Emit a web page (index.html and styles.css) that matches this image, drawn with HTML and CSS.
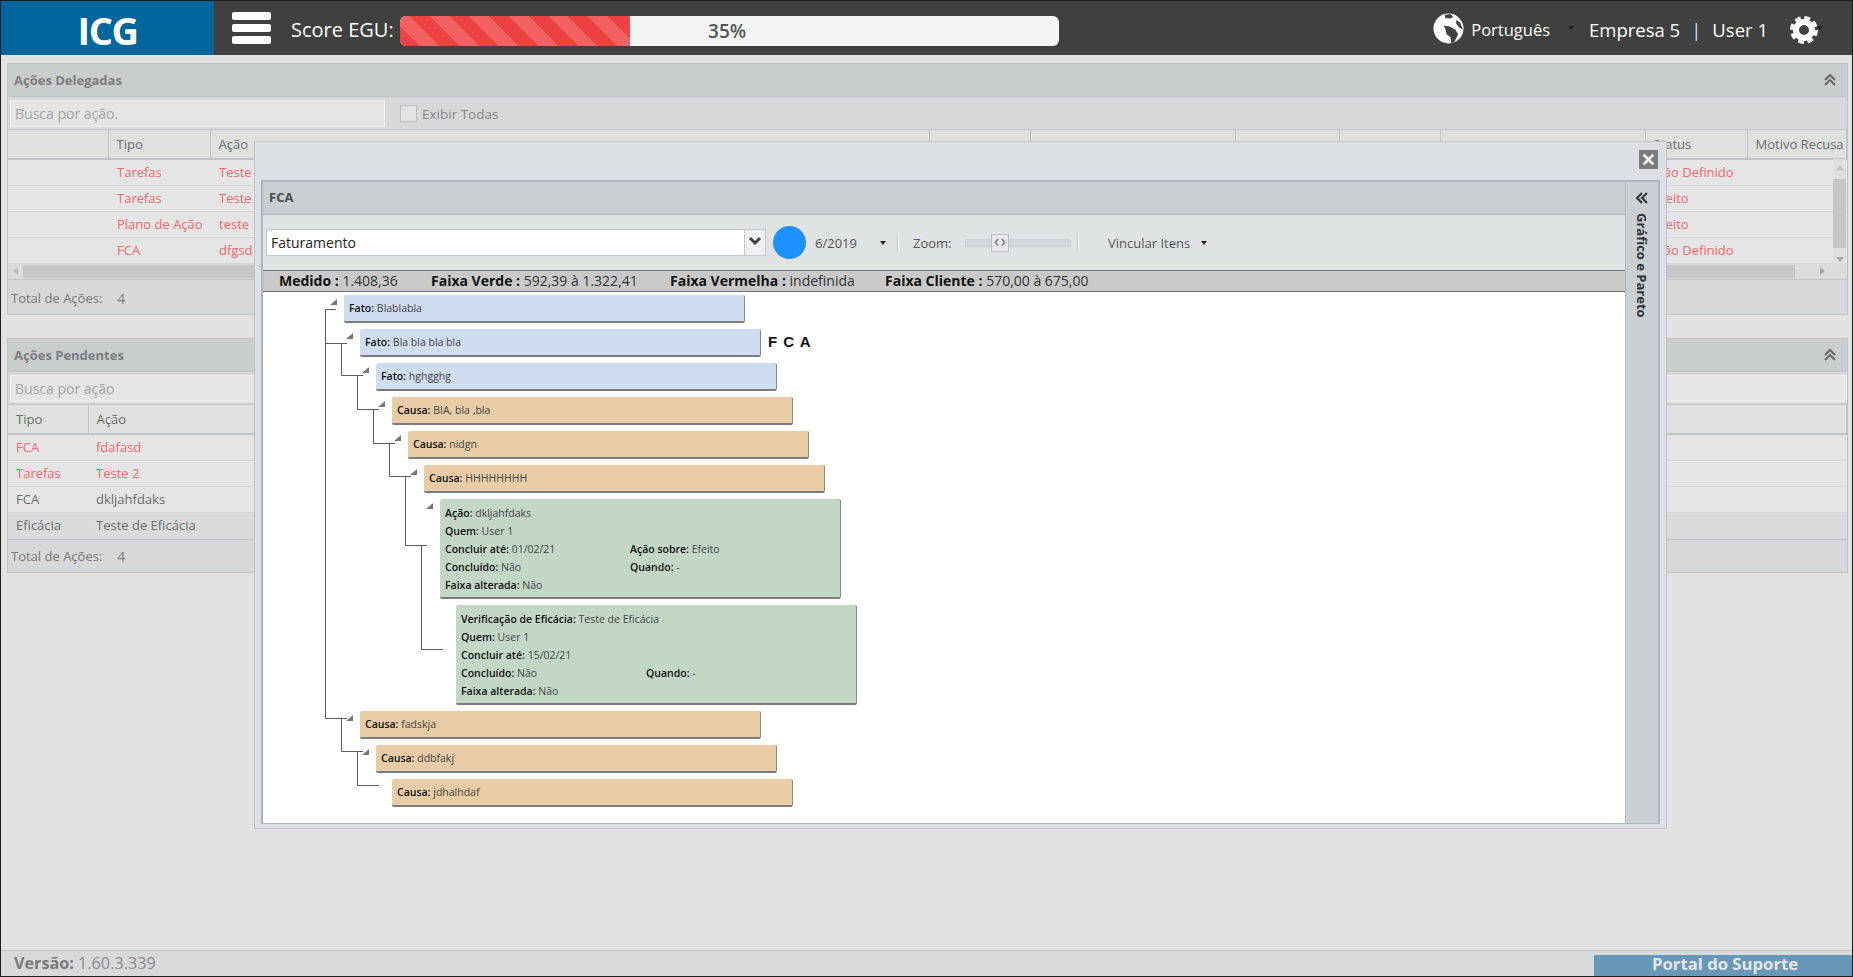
FILE: index.html
```html
<!DOCTYPE html>
<html lang="pt">
<head>
    <meta charset="UTF-8">
    <meta name="viewport" content="width=device-width, initial-scale=1.0">
    <title>ICG</title>
    <link rel="stylesheet" href="styles.css">
</head>
<body>
<div class="app">
    <header class="topbar">
        <div class="logo">ICG</div>
        <div class="burger"><span></span><span></span><span></span></div>
        <div class="score-label">Score EGU:</div>
        <div class="score-bar">
            <div class="score-fill"></div>
            <div class="score-text">35%</div>
        </div>
        <div class="user-area">
            <svg class="globe" viewBox="0 0 32 32">
                <circle cx="16" cy="16" r="15.5" fill="#fff"/>
                <path d="M12 2l6-1 3 3-4 2-2-1-2 1zM11 13l6 1 6 3 3 5-4 8-3 1-1-6-4-3-1-5zM24 7l4 3 3 7-4-2-3-4z" fill="#404040"/>
            </svg>
            <span class="lang">Português</span>
            <span class="caret caret-dark"></span>
            <span class="company">Empresa 5</span>
            <span class="pipe">|</span>
            <span class="user">User 1</span>
            <svg class="gear" viewBox="0 0 28 28">
                <circle cx="14" cy="14" r="11.5" fill="none" stroke="#fff" stroke-width="5" stroke-dasharray="5.5 3.53" />
                <circle cx="14" cy="14" r="8" fill="none" stroke="#fff" stroke-width="6"/>
            </svg>
            <span class="caret caret-dark caret-gear"></span>
        </div>
    </header>

    <main class="content">
        <section class="panel panel-top">
            <div class="panel-head">
                <span>Ações Delegadas</span>
                <svg class="dbl-up" viewBox="0 0 14 14"><path d="M2 7l5-5 5 5M2 12l5-5 5 5"/></svg>
            </div>
            <div class="panel-tools">
                <input class="search search-wide" placeholder="Busca por ação.">
                <span class="check"></span>
                <span class="check-label">Exibir Todas</span>
            </div>
            <div class="table-box">
                <table class="grid grid-top">
                    <colgroup>
                        <col class="w100"><col class="w102"><col class="w719"><col class="w101"><col class="w205"><col class="w104"><col class="w101"><col class="w205"><col class="w102"><col>
                    </colgroup>
                    <thead>
                        <tr><th></th><th>Tipo</th><th>Ação</th><th></th><th></th><th></th><th></th><th></th><th>Status</th><th>Motivo Recusa</th></tr>
                    </thead>
                    <tbody>
                        <tr class="late"><td></td><td>Tarefas</td><td>Teste</td><td></td><td></td><td></td><td></td><td></td><td>Não Definido</td><td></td></tr>
                        <tr class="late"><td></td><td>Tarefas</td><td>Teste</td><td></td><td></td><td></td><td></td><td></td><td>Efeito</td><td></td></tr>
                        <tr class="late"><td></td><td>Plano de Ação</td><td>teste</td><td></td><td></td><td></td><td></td><td></td><td>Efeito</td><td></td></tr>
                        <tr class="late"><td></td><td>FCA</td><td>dfgsd</td><td></td><td></td><td></td><td></td><td></td><td>Não Definido</td><td></td></tr>
                    </tbody>
                </table>
                <div class="vscroll">
                    <span class="tri tri-up"></span>
                    <span class="vthumb"></span>
                    <span class="tri tri-down"></span>
                </div>
                <div class="hscroll">
                    <span class="tri tri-left"></span>
                    <span class="hthumb"></span>
                    <span class="tri tri-right"></span>
                </div>
            </div>
            <div class="panel-foot">
                <span>Total de Ações:</span>
                <span class="total">4</span>
            </div>
        </section>

        <section class="panel panel-low">
            <div class="panel-head">
                <span>Ações Pendentes</span>
                <svg class="dbl-up" viewBox="0 0 14 14"><path d="M2 7l5-5 5 5M2 12l5-5 5 5"/></svg>
            </div>
            <div class="panel-tools">
                <input class="search search-full" placeholder="Busca por ação">
            </div>
            <table class="grid grid-low">
                <colgroup><col class="w80"><col></colgroup>
                <thead><tr><th>Tipo</th><th>Ação</th></tr></thead>
                <tbody>
                    <tr class="late"><td>FCA</td><td>fdafasd</td></tr>
                    <tr class="late"><td>Tarefas</td><td>Teste 2</td></tr>
                    <tr><td>FCA</td><td>dkljahfdaks</td></tr>
                    <tr class="shade"><td>Eficácia</td><td>Teste de Eficácia</td></tr>
                </tbody>
            </table>
            <div class="panel-foot">
                <span>Total de Ações:</span>
                <span class="total">4</span>
            </div>
        </section>
    </main>

    <footer class="footer">
        <div class="version"><b>Versão:</b> 1.60.3.339</div>
        <div class="support">Portal do Suporte</div>
    </footer>

    <div class="modal">
        <div class="modal-close">
            <svg viewBox="0 0 12 12"><path d="M1.5 1.5l9 9M10.5 1.5l-9 9"/></svg>
        </div>
        <div class="fca">
            <div class="fca-main">
                <div class="fca-title">FCA</div>
                <div class="fca-tools">
                    <div class="combo">
                        <span class="combo-text">Faturamento</span>
                        <span class="combo-btn">
                            <svg viewBox="0 0 14 10"><path d="M2 2l5 5 5-5"/></svg>
                        </span>
                    </div>
                    <span class="dot"></span>
                    <span class="period">6/2019</span>
                    <span class="caret caret-black"></span>
                    <span class="sep"></span>
                    <span class="zoom-label">Zoom:</span>
                    <div class="slider">
                        <span class="slider-thumb">
                            <svg viewBox="0 0 14 10"><path d="M5 1L1.5 5 5 9M9 1l3.500 4L9 9"/></svg>
                        </span>
                    </div>
                    <span class="sep sep-b"></span>
                    <span class="link-items">Vincular Itens</span>
                    <span class="caret caret-black"></span>
                </div>
                <div class="fca-status">
                    <span class="st st1"><b>Medido :</b> 1.408,36</span>
                    <span class="st st2"><b>Faixa Verde :</b> 592,39 à 1.322,41</span>
                    <span class="st st3"><b>Faixa Vermelha :</b> indefinida</span>
                    <span class="st"><b>Faixa Cliente :</b> 570,00 à 675,00</span>
                </div>
                <div class="tree">
                    <svg class="tree-lines" viewBox="263 291 1362 533">
                        <path d="M336 308.500H325.500V717.500H347M325.500 342.500H347M341.500 342.500V374.500H363M357.500 374.500V408.500H379M373.500 408.500V442.500H395M389.500 442.500V475.500H411M405.500 475.500V544.500H427M421.500 544.500V648.500H443M341.500 717.500V750.500H363M357.500 750.500V784.500H379"/>
                    </svg>
                    <div class="card fato tick"><b>Fato:</b> Blablabla</div>
                    <div class="kids">
                        <div class="row-fca">
                            <div class="card fato tick"><b>Fato:</b> Bla bla bla bla</div>
                            <span class="fca-mark">F C A</span>
                        </div>
                        <div class="kids">
                            <div class="card fato tick"><b>Fato:</b> hghgghg</div>
                            <div class="kids">
                                <div class="card causa tick"><b>Causa:</b> BIA, bla ,bla</div>
                                <div class="kids">
                                    <div class="card causa tick"><b>Causa:</b> nidgn</div>
                                    <div class="kids">
                                        <div class="card causa tick"><b>Causa:</b> HHHHHHHH</div>
                                        <div class="kids">
                                            <div class="card acao tick">
                                                <div class="wide"><b>Ação:</b> dkljahfdaks</div>
                                                <div class="wide"><b>Quem:</b> User 1</div>
                                                <div><b>Concluir até:</b> 01/02/21</div>
                                                <div><b>Ação sobre:</b> Efeito</div>
                                                <div><b>Concluído:</b> Não</div>
                                                <div><b>Quando:</b> -</div>
                                                <div class="wide"><b>Faixa alterada:</b> Não</div>
                                            </div>
                                            <div class="kids">
                                                <div class="card acao">
                                                    <div class="wide"><b>Verificação de Eficácia:</b> Teste de Eficácia</div>
                                                    <div class="wide"><b>Quem:</b> User 1</div>
                                                    <div class="wide"><b>Concluir até:</b> 15/02/21</div>
                                                    <div><b>Concluído:</b> Não</div>
                                                    <div><b>Quando:</b> -</div>
                                                    <div class="wide"><b>Faixa alterada:</b> Não</div>
                                                </div>
                                            </div>
                                        </div>
                                    </div>
                                </div>
                            </div>
                        </div>
                        <div class="card causa tick"><b>Causa:</b> fadskja</div>
                        <div class="kids">
                            <div class="card causa tick"><b>Causa:</b> ddbfakj</div>
                            <div class="kids">
                                <div class="card causa"><b>Causa:</b> jdhalhdaf</div>
                            </div>
                        </div>
                    </div>
                </div>
            </div>
            <aside class="fca-side">
                <svg class="dbl-left" viewBox="0 0 14 14"><path d="M7 2L2 7l5 5M12 2L7 7l5 5"/></svg>
                <span class="side-text">Gráfico e Pareto</span>
            </aside>
        </div>
    </div>
</div>
</body>
</html>
```
FILE: styles.css
```css
* {
    box-sizing: border-box;
}
html, body {
    margin: 0;
    height: 100%;
}
body {
    font-family: "Open Sans", "Noto Sans", sans-serif;
    font-size: 13px;
    color: #6b6b6b;
}
.app {
    position: relative;
    height: 100%;
    display: flex;
    flex-direction: column;
    background-color: #e2e2e2;
    border: 1px solid #1e1e1e;
    border-top-width: 1px;
}

/* barra superior */
.topbar {
    height: 54px;
    flex: none;
    display: flex;
    align-items: center;
    background-color: #404040;
    color: #fff;
}
.logo {
    width: 213px;
    height: 100%;
    padding-top: 2px;
    background-color: #00669c;
    text-align: center;
    font-size: 38px;
    font-weight: 700;
    line-height: 54px;
    letter-spacing: -1.5px;
}
.burger {
    width: 39px;
    margin-left: 18px;
    display: flex;
    flex-direction: column;
    gap: 4px;
}
.burger span {
    height: 8px;
    background-color: #fff;
    border-radius: 2px;
}
.score-label {
    margin: 2px 0 0 20px;
    font-size: 20px;
}
.score-bar {
    position: relative;
    width: 659px;
    height: 30px;
    margin: 5px 0 0 6px;
    background-color: #f4f4f4;
    border-radius: 6px;
    overflow: hidden;
}
.score-fill {
    width: 35%;
    height: 100%;
    background: repeating-linear-gradient(45deg, #ee4242 0, #ee4242 14px, #f26262 14px, #f26262 28px);
}
.score-text {
    position: absolute;
    top: 0;
    left: -2px;
    width: 100%;
    color: #555;
    font-size: 19px;
    font-weight: 600;
    line-height: 30px;
    text-align: center;
}
.user-area {
    margin-left: auto;
    display: flex;
    align-items: center;
    font-size: 18.500px;
}
.globe {
    width: 31px;
    height: 31px;
}
.lang {
    margin-left: 7px;
    margin-top: 2px;
    font-size: 16.500px;
}
.caret {
    width: 0;
    height: 0;
    border-left: 3.500px solid transparent;
    border-right: 3.500px solid transparent;
    border-top: 4px solid #fff;
}
.caret-dark {
    margin-left: 18px;
    border-top-color: #1f1f1f;
}
.company {
    margin: 3px 0 0 15px;
}
.pipe {
    margin: 3px 0 0 11px;
    color: #bfe3f5;
}
.user {
    margin: 3px 0 0 11px;
}
.gear {
    width: 28px;
    height: 28px;
    margin: 3px 0 0 22px;
}
.caret-gear {
    margin: 0 29px 0 -1px;
}

/* paineis de fundo */
.content {
    flex: 1;
    padding: 8px 4px 0 6px;
}
.panel {
    border: 1px solid #bfc3c6;
    background-color: #d7d8d9;
}
.panel-top {
    height: 252px;
    margin-bottom: 23px;
}
.panel-low {
    height: 235px;
}
.panel-head {
    height: 33px;
    display: flex;
    align-items: center;
    justify-content: space-between;
    padding: 0 10px 0 6px;
    background-color: #c9cdcd;
    border-bottom: 1px solid #bfc3c6;
    color: #7d7d7d;
    font-size: 13px;
    font-weight: 700;
}
.dbl-up {
    width: 14px;
    height: 14px;
}
.dbl-up path, .dbl-left path {
    fill: none;
    stroke: #666;
    stroke-width: 2;
}
.panel-tools {
    height: 33px;
    display: flex;
    align-items: center;
    padding-left: 2px;
    border-bottom: 1px solid #bfc3c6;
}
.search {
    height: 27px;
    padding: 0 4px;
    background-color: #e5e5e5;
    border: 1px solid #f0f0f0;
    font: inherit;
    font-size: 14px;
    outline: none;
}
.search::placeholder {
    color: #a3a3a3;
    opacity: 1;
}
.search-wide {
    width: 375px;
}
.search-full {
    flex: 1;
}
.check {
    width: 17px;
    height: 17px;
    margin-left: 15px;
    background-color: #e3e3e3;
    border: 1px solid #bcbcbc;
}
.check-label {
    margin: 2px 0 0 5px;
    color: #858585;
    font-size: 13.500px;
}
.table-box {
    position: relative;
}
.grid {
    width: 100%;
    table-layout: fixed;
    border-collapse: collapse;
}
.grid th {
    height: 29px;
    padding: 0 0 0 8px;
    background-color: #dfe1e0;
    border-right: 1px solid #c3c6c8;
    border-bottom: 2px solid #bfc3c6;
    font-weight: 400;
    text-align: left;
    white-space: nowrap;
}
.grid td {
    height: 26px;
    padding: 0 0 0 9px;
    background-color: #e5e5e5;
    border-bottom: 1px solid #d2d4d6;
    white-space: nowrap;
    overflow: hidden;
}
.grid .late td {
    color: #f0686c;
}
.grid .shade td {
    background-color: #dadbdc;
}
.grid-low td {
    padding-left: 8px;
}
.w80 { width: 80px; }
.w100 { width: 100px; }
.w101 { width: 101px; }
.w102 { width: 102px; }
.w104 { width: 104px; }
.w205 { width: 205px; }
.w719 { width: 719px; }
.vscroll {
    position: absolute;
    top: 29px;
    right: 1px;
    width: 13px;
    height: 105px;
    display: flex;
    flex-direction: column;
    align-items: center;
    justify-content: space-between;
    padding: 6px 0 2px;
    background-color: #e0e0e0;
}
.vthumb {
    width: 13px;
    height: 69px;
    background-color: #c6c6c6;
}
.hscroll {
    height: 15px;
    display: flex;
    align-items: center;
    padding: 0 17px 0 5px;
    background-color: #dcdcdc;
    gap: 5px;
}
.hthumb {
    width: 1772px;
    height: 13px;
    background-color: #c6c6c6;
}
.tri {
    width: 0;
    height: 0;
    flex: none;
}
.tri-up {
    border: 4px solid transparent;
    border-top: 0;
    border-bottom: 5px solid #bdbdbd;
}
.tri-down {
    border: 4px solid transparent;
    border-bottom: 0;
    border-top: 5px solid #a8a8a8;
}
.tri-left {
    border: 4px solid transparent;
    border-left: 0;
    border-right: 5px solid #bdbdbd;
}
.tri-right {
    margin-left: 20px;
    border: 4px solid transparent;
    border-right: 0;
    border-left: 5px solid #a8a8a8;
}
.panel-foot {
    display: flex;
    align-items: center;
    height: 34px;
    padding-left: 3px;
    border-top: 1px solid #bfc3c6;
    color: #777;
}
.panel-top .panel-foot {
    padding-top: 4px;
}
.total {
    margin-left: 15px;
    color: #7c7c7c;
    font-size: 14px;
}

/* rodape */
.footer {
    height: 26px;
    flex: none;
    display: flex;
    align-items: center;
    justify-content: space-between;
    background-color: #d8d9da;
    border-top: 1px solid #c2c2c2;
    color: #8a8a8a;
    font-size: 16.200px;
}
.version {
    padding: 0 0 2px 13px;
}
.version b {
    color: #7a7a7a;
}
.support {
    width: 258px;
    height: 21px;
    margin-top: 3px;
    padding-left: 58px;
    background-color: #6699b8;
    color: #e6e6e6;
    font-size: 16.700px;
    font-weight: 700;
    line-height: 17px;
}

/* janela FCA */
.modal {
    position: absolute;
    left: 253px;
    top: 140px;
    width: 1413px;
    height: 688px;
    padding: 38px 6px 4px;
    background-color: #dcdfe3;
    border: 1px solid #c0c4c9;
}
.modal-close {
    position: absolute;
    top: 8px;
    right: 8px;
    width: 19px;
    height: 19px;
    padding: 3px;
    background-color: #7c7c7c;
}
.modal-close svg {
    display: block;
}
.modal-close path {
    fill: none;
    stroke: #fff;
    stroke-width: 2.500;
}
.fca {
    height: 100%;
    display: flex;
    border: 2px solid #aeb6bd;
    border-bottom-width: 1px;
}
.fca-main {
    flex: 1;
    display: flex;
    flex-direction: column;
    min-width: 0;
}
.fca-title {
    height: 33px;
    flex: none;
    padding-left: 6px;
    background-color: #c9ced3;
    border-bottom: 1px solid #aeb6bd;
    color: #4d4d4d;
    font-size: 13px;
    font-weight: 700;
    line-height: 30px;
}
.fca-tools {
    height: 55px;
    flex: none;
    display: flex;
    align-items: center;
    padding-left: 3px;
    background-color: #e0e3e4;
}
.combo {
    width: 500px;
    height: 27px;
    display: flex;
    background-color: #fff;
    border: 1px solid #c3c8cc;
}
.combo-text {
    flex: 1;
    padding-left: 4px;
    color: #222;
    font-size: 14px;
    line-height: 25px;
}
.combo-btn {
    width: 21px;
    background-color: #eef0f1;
    border-left: 1px solid #c3c8cc;
    padding: 6px 3px;
}
.combo-btn svg {
    display: block;
}
.combo-btn path {
    fill: none;
    stroke: #444;
    stroke-width: 3;
}
.dot {
    width: 33px;
    height: 33px;
    margin-left: 7px;
    background-color: #1e90ff;
    border-radius: 50%;
}
.period {
    width: 65px;
    margin-left: 9px;
    color: #555;
}
.caret-black {
    border-top-color: #222;
}
.sep {
    width: 2px;
    height: 18px;
    margin: 0 14px 0 11px;
    background-color: #fff;
    border-left: 1px solid #c3c8cc;
}
.zoom-label {
    width: 52px;
    color: #555;
}
.slider {
    position: relative;
    width: 106px;
    height: 8px;
    background-color: #d3d7da;
    border: 1px solid #cdd1d4;
}
.slider-thumb {
    position: absolute;
    left: 25px;
    top: -6px;
    width: 18px;
    height: 18px;
    padding: 3px 2px;
    background-color: #e7e9ea;
    border: 1px solid #bcc1c5;
}
.slider-thumb svg {
    display: block;
}
.slider-thumb path {
    fill: none;
    stroke: #8a8a8a;
    stroke-width: 2;
}
.sep-b {
    margin: 0 29px 0 6px;
}
.link-items {
    margin-right: 11px;
    color: #555;
}
.fca-status {
    height: 22px;
    flex: none;
    display: flex;
    padding-left: 16px;
    background-color: #c9c9c9;
    border-top: 1px solid #6f7580;
    border-bottom: 1px solid #6f7580;
    color: #333;
    font-size: 14px;
    line-height: 20px;
    white-space: nowrap;
}
.fca-status b {
    color: #111;
}
.st1 { width: 152px; }
.st2 { width: 239px; }
.st3 { width: 215px; }
.tree {
    position: relative;
    flex: 1;
    padding: 3px 0 0 81px;
    background-color: #fff;
}
.tree-lines {
    position: absolute;
    top: 0;
    left: 0;
    width: 1362px;
    height: 533px;
}
.tree-lines path {
    fill: none;
    stroke: #5a5a5a;
    stroke-width: 1;
}
.kids {
    margin-left: 16px;
}
.card {
    position: relative;
    width: 401px;
    min-height: 28px;
    margin-bottom: 6px;
    padding: 0 5px;
    border-right: 1px solid #8a8a8a;
    border-bottom: 2px solid #7c7c7c;
    border-radius: 2px;
    color: #444;
    font-size: 10.500px;
    line-height: 26px;
}
.card b {
    color: #111;
    font-weight: 600;
}
.tick::before {
    content: "";
    position: absolute;
    top: 4px;
    left: -14px;
    border-left: 7px solid transparent;
    border-bottom: 6px solid #777;
}
.fato {
    background-color: #cfddf0;
}
.causa {
    background-color: #e9cca6;
}
.acao {
    height: 100px;
    display: grid;
    grid-template-columns: 185px 1fr;
    align-content: start;
    padding-top: 5px;
    background-color: #c2d7c5;
    line-height: 18px;
}
.acao .wide {
    grid-column: 1 / -1;
}
.row-fca {
    display: flex;
    gap: 7px;
}
.fca-mark {
    color: #111;
    font-family: "Liberation Sans", Arial, sans-serif;
    font-size: 15px;
    font-weight: 700;
    letter-spacing: 1px;
    line-height: 25px;
}
.fca-side {
    width: 33px;
    flex: none;
    display: flex;
    flex-direction: column;
    align-items: center;
    padding: 9px 1px 0 0;
    background-color: #cbd0d5;
    border-left: 1px solid #b5bcc2;
}
.dbl-left {
    width: 14px;
    height: 14px;
}
.dbl-left path {
    stroke: #333;
}
.side-text {
    margin-top: 8px;
    writing-mode: vertical-rl;
    color: #333;
    font-size: 13px;
    font-weight: 700;
}
```
